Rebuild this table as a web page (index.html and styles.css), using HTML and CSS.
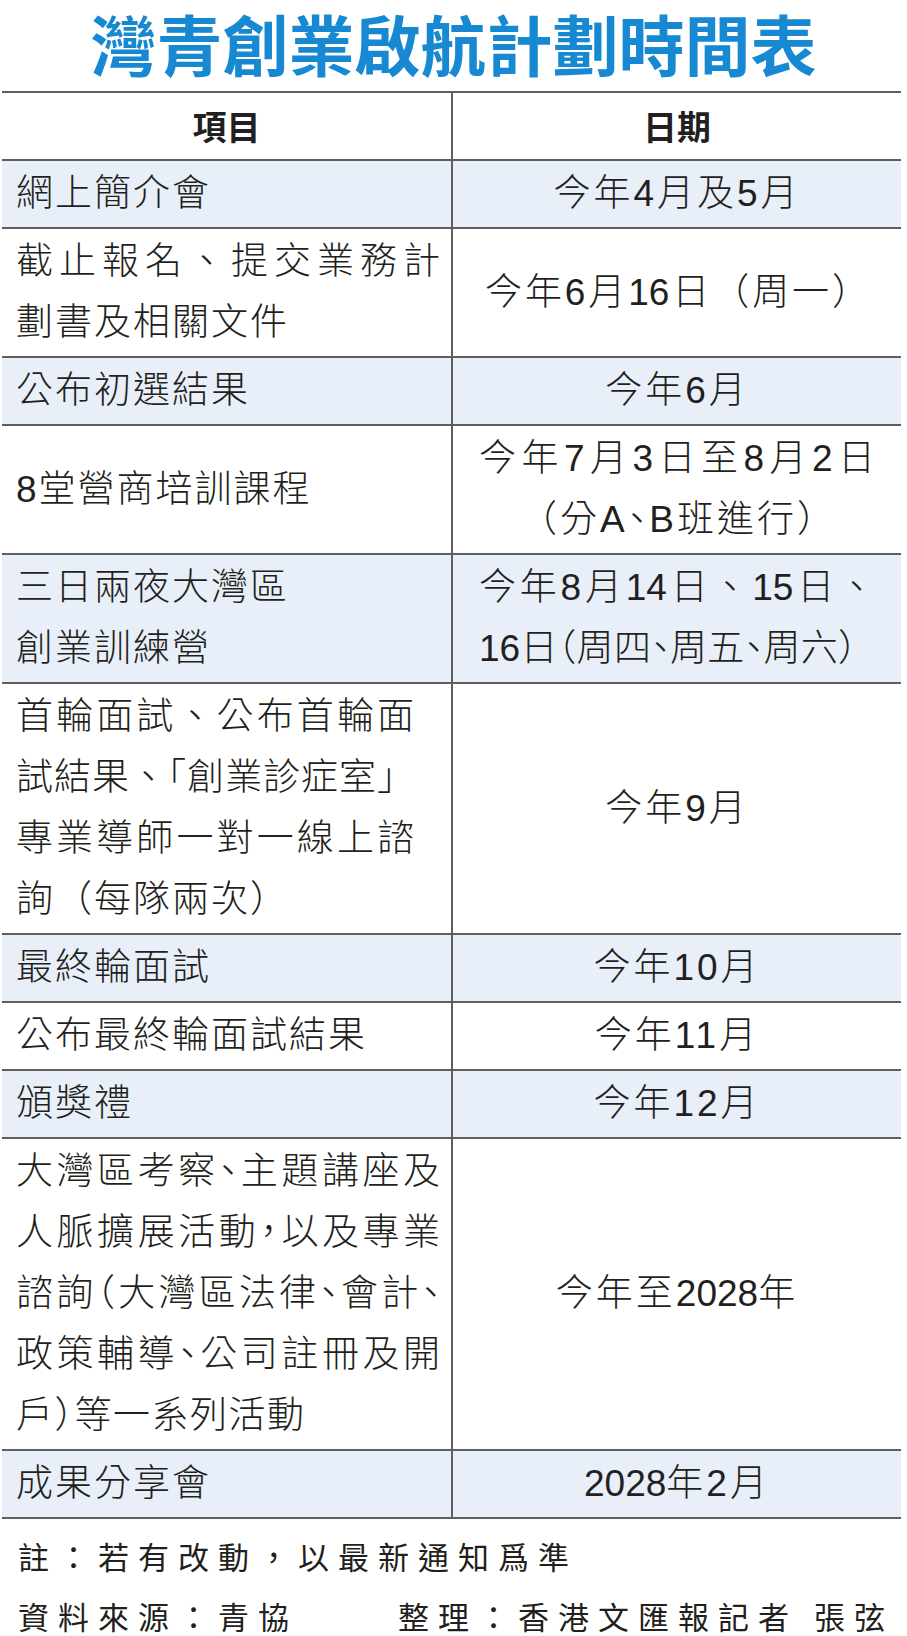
FILE: index.html
```html
<!DOCTYPE html>
<html lang="zh-Hant">
<head>
<meta charset="utf-8">
<link rel="stylesheet" href="styles.css">
</head>
<body>
<div class="page">
  <h1 class="title">灣青創業啟航計劃時間表</h1>
  <table class="sched">
    <thead>
      <tr><th class="c-item">項目</th><th class="c-date">日期</th></tr>
    </thead>
    <tbody>
      <tr class="alt"><td class="c-item">網上簡介會</td><td class="c-date">今年4月及5月</td></tr>
      <tr><td class="c-item"><span class="j w424">截止報名、提交業務計</span><br>劃書及相關文件</td><td class="c-date"><span class="j w384">今年6月16日（周一）</span></td></tr>
      <tr class="alt"><td class="c-item">公布初選結果</td><td class="c-date">今年6月</td></tr>
      <tr><td class="c-item">8堂營商培訓課程</td><td class="c-date"><span class="j w396">今年7月3日至8月2日</span><br><span class="j w314">（分A<span class="h">、</span>B班進行）</span></td></tr>
      <tr class="alt"><td class="c-item">三日兩夜大灣區<br>創業訓練營</td><td class="c-date"><span class="j w396">今年8月14日、15日、</span><br><span class="j w396">16日<span class="h">（</span>周四<span class="h">、</span>周五<span class="h">、</span>周六）</span></td></tr>
      <tr><td class="c-item"><span class="j w398">首輪面試、公布首輪面</span><br><span class="j w398">試結果、「創業診症室」</span><br><span class="j w398">專業導師一對一線上諮</span><br>詢（每隊兩次）</td><td class="c-date">今年9月</td></tr>
      <tr class="alt"><td class="c-item">最終輪面試</td><td class="c-date">今年10月</td></tr>
      <tr><td class="c-item">公布最終輪面試結果</td><td class="c-date">今年11月</td></tr>
      <tr class="alt"><td class="c-item">頒獎禮</td><td class="c-date">今年12月</td></tr>
      <tr><td class="c-item tight"><span class="j w424">大灣區考察<span class="h">、</span>主題講座及</span><br><span class="j w424">人脈擴展活動<span class="h">，</span>以及專業</span><br><span class="j w424">諮詢<span class="h">（</span>大灣區法律<span class="h">、</span>會計<span class="h">、</span></span><br><span class="j w424">政策輔導<span class="h">、</span>公司註冊及開</span><br>戶<span class="h">）</span>等一系列活動</td><td class="c-date">今年至<span class="n">2028</span>年</td></tr>
      <tr class="alt"><td class="c-item">成果分享會</td><td class="c-date"><span class="n">2028</span>年2月</td></tr>
    </tbody>
  </table>
  <div class="notes">
    <p class="note">註：若有改動，以最新通知爲準</p>
    <p class="note credits"><span>資料來源：青協</span><span>整理：香港文匯報記者 張弦</span></p>
  </div>
</div>
</body>
</html>
```
FILE: styles.css
```css
html, body {
  margin: 0;
  padding: 0;
  background: #ffffff;
}
body {
  font-family: "Liberation Sans", "Noto Sans CJK TC", sans-serif;
  color: #231f20;
}
.page {
  width: 907px;
}
.title {
  margin: 0;
  padding: 2px 0 0;
  line-height: 80px;
  text-align: center;
  font-family: "Noto Sans CJK TC", sans-serif;
  font-weight: 700;
  font-size: 66px;
  color: #1789d2;
}
.sched {
  margin: 9px 0 0 2px;
  width: 899px;
  border-collapse: collapse;
  table-layout: fixed;
}
.sched th,
.sched td {
  border-top: 2px solid #5e5e5e;
  border-bottom: 2px solid #5e5e5e;
  padding: 2px 0 3px;
  line-height: 61px;
  vertical-align: middle;
  white-space: nowrap;
}
.sched th {
  font-family: "Noto Sans CJK TC", sans-serif;
  font-weight: 700;
  font-size: 34px;
  text-align: center;
}
.sched .c-item {
  width: 449px;
  border-right: 2px solid #5e5e5e;
}
.sched td.c-item {
  padding-left: 14px;
  text-align: left;
  font-size: 37px;
  font-weight: 300;
  letter-spacing: 2px;
}
.sched td.c-item.tight {
  letter-spacing: 1.5px;
}
.sched td.c-date {
  text-align: center;
  font-size: 37px;
  font-weight: 300;
  letter-spacing: 3px;
}
.sched tr.alt td {
  background: #e8eff9;
}
.j {
  display: inline-block;
  text-align: justify;
  text-align-last: justify;
  letter-spacing: 0;
}
.w424 { width: 424px; }
.w398 { width: 398px; }
.w396 { width: 396px; }
.w384 { width: 384px; }
.w314 { width: 314px; }
.h {
  font-feature-settings: "halt";
}
.n {
  font-family: "Liberation Sans Narrow", "Liberation Sans", sans-serif;
  letter-spacing: 0;
}
.notes {
  padding: 8px 0 0 18px;
}
.note {
  margin: 0;
  height: 60px;
  line-height: 58px;
  font-family: "Noto Sans CJK TC", sans-serif;
  font-size: 31px;
  letter-spacing: 9px;
  white-space: nowrap;
}
.credits {
  display: flex;
  gap: 100px;
}
```
